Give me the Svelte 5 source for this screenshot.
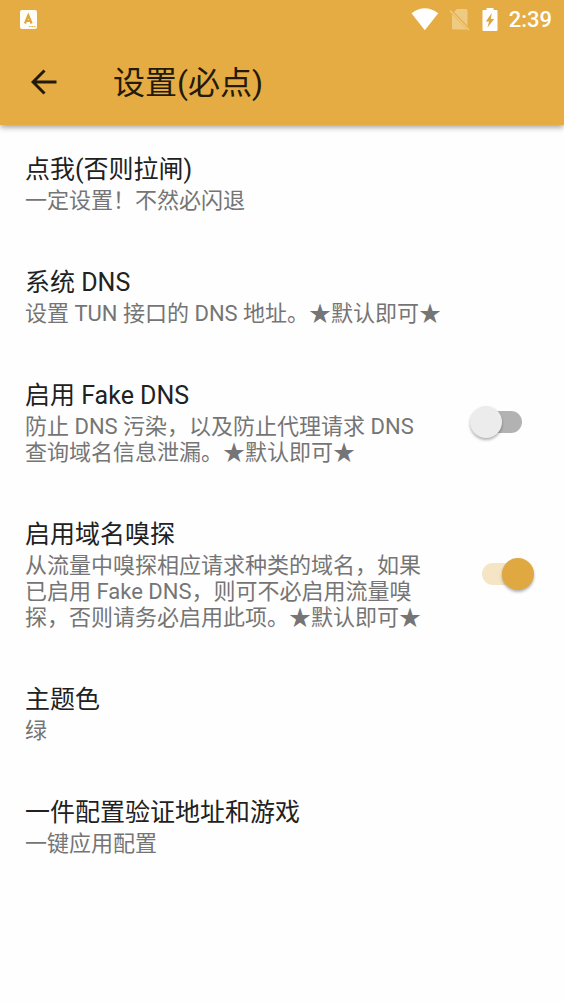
<script>
let items = $state([
    { title: '点我(否则拉闸)', summary: '一定设置！不然必闪退' },
    { title: '系统 DNS', summary: '设置 TUN 接口的 DNS 地址。★默认即可★' },
    { title: '启用 Fake DNS', summary: '防止 DNS 污染，以及防止代理请求 DNS 查询域名信息泄漏。★默认即可★', checked: false },
    { title: '启用域名嗅探', summary: '从流量中嗅探相应请求种类的域名，如果已启用 Fake DNS，则可不必启用流量嗅探，否则请务必启用此项。★默认即可★', checked: true },
    { title: '主题色', summary: '绿' },
    { title: '一件配置验证地址和游戏', summary: '一键应用配置' }
])
</script>

{#snippet texts(item)}
    <span class="texts">
        <span class="title">{item.title}</span>
        <span class="summary">{item.summary}</span>
    </span>
{/snippet}

<div class="screen" lang="zh-CN">
    <header>
        <div class="status">
            <svg width="18" height="19" viewBox="0 0 18 19">
                <rect width="17" height="19" rx="2" fill="#fffdf5" />
                <path d="M5 13.5 8.3 5.500 11.600 13.500M6.200 11H10.500" fill="none" stroke="#dda63e" stroke-width="2.2" />
                <path d="M9 16.500H16" stroke="#e4ac42" stroke-dasharray="1.6 0.8" />
            </svg>
            <div class="indicators">
                <svg width="28" height="23" viewBox="0 0 28 23">
                    <path d="M0.5 5.2Q13.8-4.6 27.2 5.2L13.8 22.3Z" fill="#fff" />
                </svg>
                <svg width="21" height="23" viewBox="0 0 21 23">
                    <path d="M7 1H16Q17.5 1 17.5 2.5V18L4 4ZM2 6 17 21.500H4Q2 21.500 2 20Z" fill="#efca83" />
                    <path d="M0 2.500 19 22" stroke="#efca83" stroke-width="1.5" />
                </svg>
                <svg width="16" height="23" viewBox="0 0 16 23">
                    <path d="M4.5 0H11.5V2H14.5Q15.5 2 15.5 3V22Q15.5 23 14.5 23H1.5Q0.5 23 0.5 22V3Q0.5 2 1.5 2H4.5Z" fill="#fff" />
                    <path d="M9.8 5 3.8 13.5H7L5.500 19.500 12.200 11H8.800Z" fill="#dfa63c" />
                </svg>
                <time>2:39</time>
            </div>
        </div>
        <div class="toolbar">
            <button class="back" aria-label="返回">
                <svg width="26" height="26" viewBox="0 0 26 26">
                    <path d="M13.5 1.5 2 13 13.5 24.5M2 13H25.5" fill="none" stroke="#241a0a" stroke-width="3" />
                </svg>
            </button>
            <h1>设置(必点)</h1>
        </div>
    </header>

    <main>
        {#each items as item}
            {#if item.checked === undefined}
                <button class="row">{@render texts(item)}</button>
            {:else}
                <label class="row">
                    {@render texts(item)}
                    <input type="checkbox" role="switch" bind:checked={item.checked} />
                </label>
            {/if}
        {/each}
    </main>
</div>

<style>
:global(body) {
    margin: 0;
    background: #fefefe;
}

.screen {
    font-family: Roboto, "Noto Sans CJK SC", sans-serif;
    color: #212121;
}

header {
    background: #e4ac42;
    box-shadow: 0 2px 6px rgba(0, 0, 0, 0.4);
}

.status {
    display: flex;
    align-items: center;
    justify-content: space-between;
    height: 38px;
    padding: 0 12px 0 20px;
}

.indicators {
    display: flex;
    align-items: center;
    gap: 11px;
}

time {
    padding-top: 2px;
    color: #fff;
    font-size: 22px;
    font-weight: 500;
    line-height: 26px;
}

.toolbar {
    display: flex;
    align-items: center;
    gap: 56px;
    height: 87px;
    padding: 0 31px;
}

button {
    border: 0;
    padding: 0;
    background: none;
    font: inherit;
    color: inherit;
    text-align: left;
    cursor: pointer;
}

.back {
    display: flex;
}

h1 {
    margin: 0;
    padding-top: 2px;
    color: #241a0a;
    font-size: 32px;
    font-weight: 400;
    line-height: 40px;
}

main {
    display: flex;
    flex-direction: column;
    padding-top: 2px;
}

.row {
    display: flex;
    align-items: center;
    gap: 44px;
    padding: 25px 30px 26px 25px;
    cursor: pointer;
}

.texts {
    flex: 1;
}

.title,
.summary {
    display: block;
}

.title {
    font-size: 25px;
    line-height: 36px;
}

.summary {
    color: #757575;
    font-size: 22px;
    line-height: 26px;
}

input {
    appearance: none;
    position: relative;
    display: flex;
    flex: none;
    width: 64px;
    height: 32px;
    margin: 0;
    cursor: pointer;
}

input::before {
    content: "";
    position: absolute;
    inset: 5px 12px;
    border-radius: 11px;
    background: #b2b2b2;
}

input::after {
    content: "";
    position: relative;
    width: 32px;
    height: 32px;
    border-radius: 50%;
    background: #ececec;
    box-shadow: 0 2px 3px rgba(0, 0, 0, 0.3);
}

input:checked {
    justify-content: flex-end;
}

input:checked::before {
    background: #f6e5c4;
}

input:checked::after {
    background: #e0a840;
}
</style>
